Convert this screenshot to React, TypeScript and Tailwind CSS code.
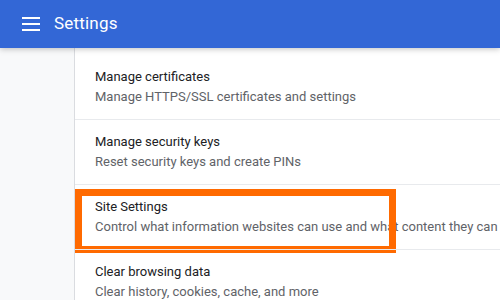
const rows = [
  { title: "Manage certificates", sub: "Manage HTTPS/SSL certificates and settings" },
  { title: "Manage security keys", sub: "Reset security keys and create PINs" },
  {
    title: "Site Settings",
    sub: "Control what information websites can use and what content they can show you",
    marked: true,
  },
  { title: "Clear browsing data", sub: "Clear history, cookies, cache, and more" },
]

export default function App() {
  return (
    <div className="w-[500px] h-[300px] overflow-hidden bg-[#f8f9fa] font-['Roboto',sans-serif] flex flex-col">
      <header className="relative z-10 h-12 shrink-0 bg-[#3367d6] flex items-center shadow-[0_1px_6px_rgba(0,0,0,0.25)]">
        <div className="ml-[22px] w-[18px] flex flex-col gap-[4px]">
          <div className="h-[2px] bg-white" />
          <div className="h-[2px] bg-white" />
          <div className="h-[2px] bg-white" />
        </div>
        <div className="ml-[14px] text-[17px] text-white tracking-[0.2px]">Settings</div>
      </header>

      <div className="flex flex-1 min-h-0">
        <div className="w-[75px] shrink-0 border-r border-[#dadce0]" />
        <div className="flex-1 bg-white pt-[7px] overflow-hidden">
          {rows.map((r, i) => (
            <div
              key={r.title}
              className={
                "relative pl-5 py-3 whitespace-nowrap text-[13px] leading-5 " +
                (i > 0 ? "border-t border-[#e8eaed]" : "")
              }
            >
              <div className="text-[#202124]">{r.title}</div>
              <div className="text-[#5f6368]">{r.sub}</div>
              {r.marked && (
                <div className="absolute left-0 top-[4px] w-[321px] h-[64px] border-[7px] border-[#ff6a00]" />
              )}
            </div>
          ))}
        </div>
      </div>
    </div>
  )
}
